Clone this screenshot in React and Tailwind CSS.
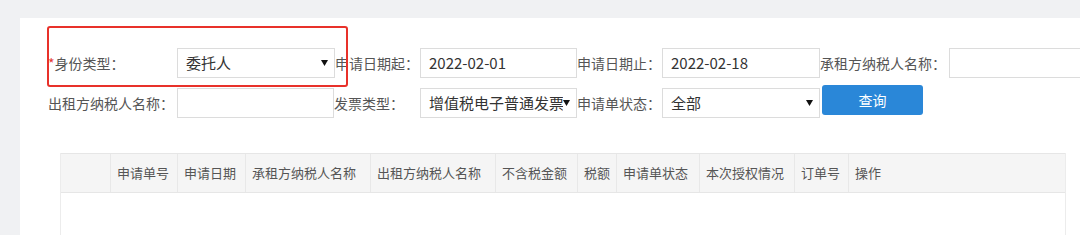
import React from 'react';

const font = { fontFamily: '"Noto Sans CJK SC", "Noto Sans", sans-serif' };

function Arrow() {
    return (
        <svg width="7" height="6" viewBox="0 0 7 6" className="shrink-0">
            <path d="M0 0 L7 0 L3.5 6 Z" fill="#111" />
        </svg>
    );
}

function Label({ w, children, required }) {
    return (
        <div className={`${w} shrink-0 text-[14px] text-[#555] whitespace-nowrap leading-[20px]`}>
            {required && <span className="text-[#e53935]">*</span>}
            {children}
        </div>
    );
}

function Field({ w, value, select }) {
    return (
        <div className={`${w} shrink-0 h-[30px] border border-[#dcdcdc] bg-white flex items-center pl-[8px] pr-[6px] text-[15px] text-[#333]`}>
            <span className="flex-1 overflow-hidden whitespace-nowrap leading-[22px]">{value}</span>
            {select && <Arrow />}
        </div>
    );
}

const columns = [
    { title: '', w: 'w-[50px]' },
    { title: '申请单号', w: 'w-[67px]' },
    { title: '申请日期', w: 'w-[68px]' },
    { title: '承租方纳税人名称', w: 'w-[125px]' },
    { title: '出租方纳税人名称', w: 'w-[125px]' },
    { title: '不含税金额', w: 'w-[82px]' },
    { title: '税额', w: 'w-[39px]' },
    { title: '申请单状态', w: 'w-[83px]' },
    { title: '本次授权情况', w: 'w-[95px]' },
    { title: '订单号', w: 'w-[54px]' },
    { title: '操作', w: 'flex-1' },
];

export default function App() {
    return (
        <div className="w-[1080px] h-[235px] overflow-hidden bg-[#f0f1f3] pt-[18px] pl-[20px]" style={font}>
            <div className="relative h-full bg-white pl-[28px] pt-[30px]">
                {/* 红色标注框 */}
                <div className="absolute left-[27px] top-[8px] w-[301px] h-[61px] border-[2.5px] border-[#e8312a] rounded-[3px]"></div>

                <div className="flex items-center h-[30px] whitespace-nowrap">
                    <Label w="w-[129px]" required>身份类型：</Label>
                    <Field w="w-[158px]" value="委托人" select />
                    <Label w="w-[85px]">申请日期起：</Label>
                    <Field w="w-[157px]" value="2022-02-01" />
                    <Label w="w-[85px]">申请日期止：</Label>
                    <Field w="w-[158px]" value="2022-02-18" />
                    <Label w="w-[129px]">承租方纳税人名称：</Label>
                    <Field w="w-[160px]" value="" />
                </div>

                <div className="flex items-center h-[30px] mt-[10px] whitespace-nowrap">
                    <Label w="w-[129px]">出租方纳税人名称：</Label>
                    <Field w="w-[157px]" value="" />
                    <Label w="w-[86px]">发票类型：</Label>
                    <Field w="w-[157px]" value="增值税电子普通发票" select />
                    <Label w="w-[85px]">申请单状态：</Label>
                    <Field w="w-[158px]" value="全部" select />
                    <button className="ml-[2px] -mt-[6px] w-[101px] h-[30px] rounded-[3px] bg-[#2a87d8] text-white text-[14px] leading-none">
                        查询
                    </button>
                </div>

                <div className="ml-[12px] mr-[14px] mt-[35px] border-l border-r border-[#ececec]">
                    <div className="flex h-[40px] bg-[#f5f5f5] border-t border-b border-[#e6e6e6]">
                        {columns.map((c, i) => (
                            <div
                                key={i}
                                className={`${c.w} shrink-0 flex items-center pl-[6px] text-[13px] text-[#555] whitespace-nowrap ${i < columns.length - 1 ? 'border-r border-[#e8e8e8]' : ''}`}
                            >
                                {c.title}
                            </div>
                        ))}
                    </div>
                    <div className="h-[80px] bg-white"></div>
                </div>
            </div>
        </div>
    );
}
